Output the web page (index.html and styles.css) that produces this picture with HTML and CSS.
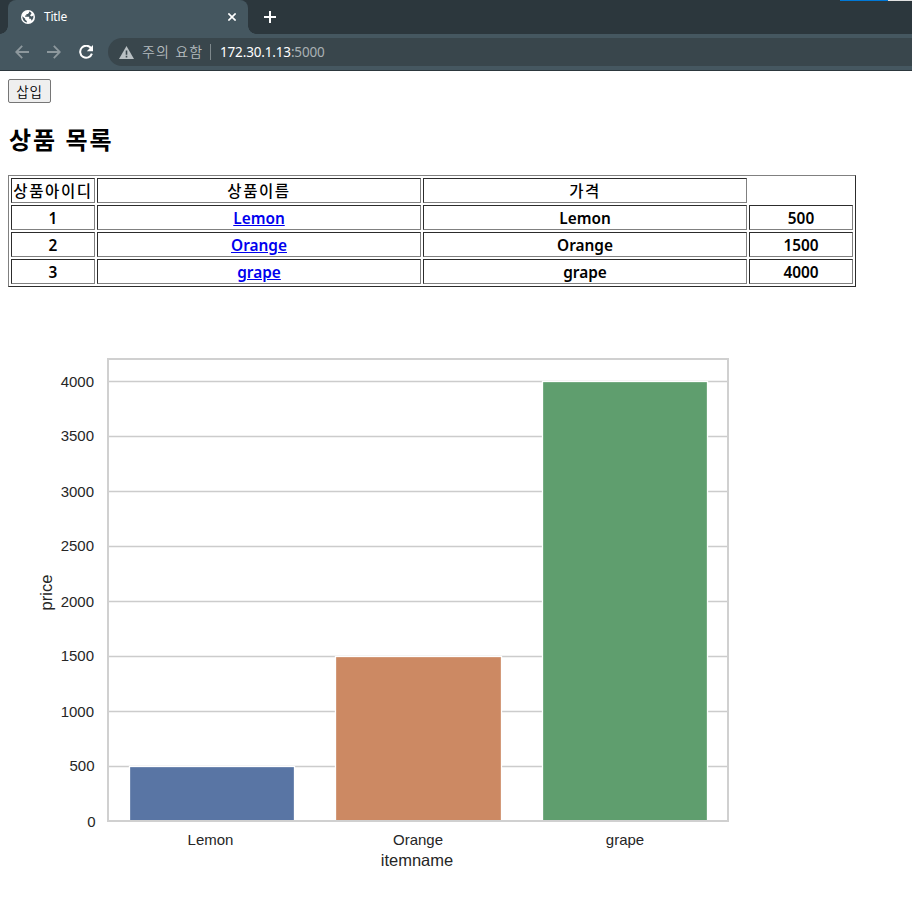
FILE: index.html
```html
<!DOCTYPE html>
<html lang="ko">
<head>
<meta charset="utf-8">
<title>Title</title>
<link rel="stylesheet" href="styles.css">
</head>
<body>
<header class="browser">
  <div class="tabstrip">
    <div class="tab">
      <svg class="globe" width="14" height="14" viewBox="0 0 14 14"><circle cx="7" cy="7" r="7" fill="#fff"/><path d="M1.4 6.2 4.2 8.8 4.2 9.8 5.8 11V12.5A5.6 5.6 0 0 1 1.4 6.2ZM8 1.6V2.8L6.8 4H5.4V5.4H4.1V6.8H8.2V8.8H9.8L10.8 10.8A5.6 5.6 0 0 0 12.4 5.6L10.6 6.6 9 5.4 10.6 3.2A5.6 5.6 0 0 0 8 1.6Z" fill="#455760"/></svg>
      <span class="tab-title">Title</span>
      <svg class="close" width="8" height="8" viewBox="0 0 8 8"><path d="M.4.4 7.6 7.6M7.6.4.4 7.6" stroke="#fff" stroke-width="1.6"/></svg>
    </div>
    <svg class="plus" width="12" height="12" viewBox="0 0 12 12"><path d="M6 0V12M0 6H12" stroke="#fff" stroke-width="2"/></svg>
    <div class="edge"></div>
  </div>
  <div class="toolbar">
    <svg class="nav" width="14" height="14" viewBox="0 0 14 14"><path d="M14 7H1.4M7.2.8 1.2 7 7.2 13.2" fill="none" stroke="#8d989d" stroke-width="1.8"/></svg>
    <svg class="nav" width="14" height="14" viewBox="0 0 14 14"><path d="M0 7H12.6M6.8.8 12.8 7 6.8 13.2" fill="none" stroke="#8d989d" stroke-width="1.8"/></svg>
    <svg class="nav reload" width="15" height="14" viewBox="0 0 15 14"><path d="M12.2 3.4A6 6 0 1 0 12.9 8.6" fill="none" stroke="#fff" stroke-width="2"/><path d="M14 0V6.2H7.8Z" fill="#fff"/></svg>
    <div class="address">
      <svg class="warn" width="15" height="13" viewBox="0 0 15 13"><path d="M7.5 0 15 13H0Z" fill="#b9c0c3"/><path d="M7.5 4.6V8.8M7.5 9.8V11.4" stroke="#39464c" stroke-width="1.6"/></svg>
      <span class="notice">주의 요함</span>
      <span class="divider"></span>
      <span class="url">172.30.1.13<span class="port">:5000</span></span>
    </div>
  </div>
</header>
<main class="page">
  <button class="insert" type="button">삽입</button>
  <h2>상품 목록</h2>
  <table>
    <colgroup><col class="c-id"><col class="c-name"><col class="c-name"><col class="c-price"></colgroup>
    <tr class="head"><th>상품아이디</th><th>상품이름</th><th>가격</th></tr>
    <tr><th>1</th><th><a href="#">Lemon</a></th><th>Lemon</th><th>500</th></tr>
    <tr><th>2</th><th><a href="#">Orange</a></th><th>Orange</th><th>1500</th></tr>
    <tr><th>3</th><th><a href="#">grape</a></th><th>grape</th><th>4000</th></tr>
  </table>
  <svg class="chart" width="800" height="600" viewBox="8 287 800 600">
    <g class="grid">
      <path d="M108 381.5H728M108 436.5H728M108 491.5H728M108 546.5H728M108 601.5H728M108 656.5H728M108 711.5H728M108 766.5H728"/>
    </g>
    <g class="bars">
      <rect x="129.5" y="766.5" width="165" height="55" fill="#5975a4"/>
      <rect x="335.5" y="656.5" width="166" height="165" fill="#cc8963"/>
      <rect x="542.5" y="381.5" width="165" height="440" fill="#5f9e6e"/>
    </g>
    <rect class="frame" x="108" y="359" width="620" height="462"/>
    <g class="ticks y">
      <text x="94" y="387">4000</text><text x="94" y="441">3500</text><text x="94" y="497">3000</text>
      <text x="94" y="551">2500</text><text x="94" y="607">2000</text><text x="94" y="661">1500</text>
      <text x="94" y="717">1000</text><text x="94.5" y="771">500</text><text x="95.5" y="827">0</text>
    </g>
    <g class="ticks">
      <text x="210.5" y="845">Lemon</text><text x="418" y="845">Orange</text><text x="625" y="845">grape</text>
    </g>
    <g class="labels">
      <text x="417" y="866">itemname</text>
      <text transform="translate(52 592.5) rotate(-90)">price</text>
    </g>
  </svg>
</main>
</body>
</html>
```
FILE: styles.css
```css
* { box-sizing: border-box; }
body {
  margin: 0;
  background: #fff;
  color: #000;
  font-family: "Noto Sans", "Noto Sans CJK KR", sans-serif;
  overflow: hidden;
}
svg { display: block; flex: none; }
.browser { height: 71px; border-bottom: 1px solid #2c373d; background: #455760; }
.tabstrip { display: flex; height: 34px; padding-left: 8px; background: #2c373d; }
.tab {
  position: relative;
  display: flex;
  align-items: center;
  width: 240px;
  padding: 0 12px 0 13px;
  border-radius: 8px 8px 0 0;
  background: #455760;
}
.tab::before, .tab::after {
  content: "";
  position: absolute;
  bottom: 0;
  width: 8px;
  height: 8px;
}
.tab::before { left: -8px; background: radial-gradient(circle at 0 0, transparent 7.5px, #455760 8px); }
.tab::after { right: -8px; background: radial-gradient(circle at 100% 0, transparent 7.5px, #455760 8px); }
.tab-title { margin-left: 9px; color: #fff; font-size: 12px; line-height: 16px; letter-spacing: -.2px; }
.close { margin-left: auto; }
.plus { margin: 11px 0 0 16px; }
.edge {
  width: 72px;
  height: 1px;
  margin-left: auto;
  background: linear-gradient(90deg, #0078d7 48px, #e1e1e1 48px);
}
.toolbar { display: flex; align-items: center; height: 36px; padding-left: 15px; }
.nav { margin-right: 18px; }
.reload { margin-right: 14px; }
.address {
  display: flex;
  flex: 1;
  align-items: center;
  height: 28px;
  padding-left: 11px;
  border-radius: 14px 0 0 14px;
  background: #39464c;
  font-size: 14px;
  line-height: 20px;
  white-space: nowrap;
}
.notice { width: 61px; margin: -2px 0 0 8px; color: #b5bcbf; font-family: "Noto Sans CJK KR", sans-serif; font-weight: 350; letter-spacing: 1.2px; }
.divider { width: 1px; height: 16px; margin: 0 9px 0 7px; background: #7e888c; }
.url { color: #fff; font-size: 13.5px; letter-spacing: -.16px; }
.port { color: #a9b1b4; }
.page { display: flex; flex-direction: column; align-items: flex-start; padding: 8px 8px 0; }
.insert {
  width: 43px;
  height: 24px;
  padding: 0;
  border: 1px solid #767676;
  border-radius: 2px;
  background: #efefef;
  color: #000;
  font: 350 13.5px/20px "Noto Sans CJK KR", sans-serif;
  letter-spacing: .9px;
}
h2 { margin: 20px 0 20px 1px; font: 700 24px/32px "Noto Sans CJK KR", sans-serif; letter-spacing: 1.9px; }
table {
  width: 848px;
  height: 112px;
  table-layout: fixed;
  border: 1px solid;
  border-color: #808080 #2c2c2c #2c2c2c #808080;
  border-spacing: 2px;
}
.c-id { width: 84px; }
.c-name { width: 324px; }
.c-price { width: 104px; }
th {
  height: 25px;
  padding: 2px 0 0;
  border: 1px solid;
  border-color: #2c2c2c #808080 #808080 #2c2c2c;
  font-size: 15.4px;
  font-weight: 600;
  line-height: 21px;
  white-space: nowrap;
}
.head th { padding: 0 0 1px; font-family: "Noto Sans CJK KR", sans-serif; font-size: 15.5px; font-weight: 500; letter-spacing: 1.6px; }
a { color: #0000ee; }
.grid path { stroke: #ccc; stroke-width: 1.3; }
.bars rect { stroke: #fff; stroke-width: 1.3; }
.frame { fill: none; stroke: #d0d0d0; stroke-width: 2; }
.chart text { font-family: "Liberation Sans", Arial, sans-serif; fill: #262626; text-anchor: middle; }
.chart .ticks text { font-size: 15px; }
.chart .y text { text-anchor: end; }
.chart .labels text { font-size: 16.5px; }
```
